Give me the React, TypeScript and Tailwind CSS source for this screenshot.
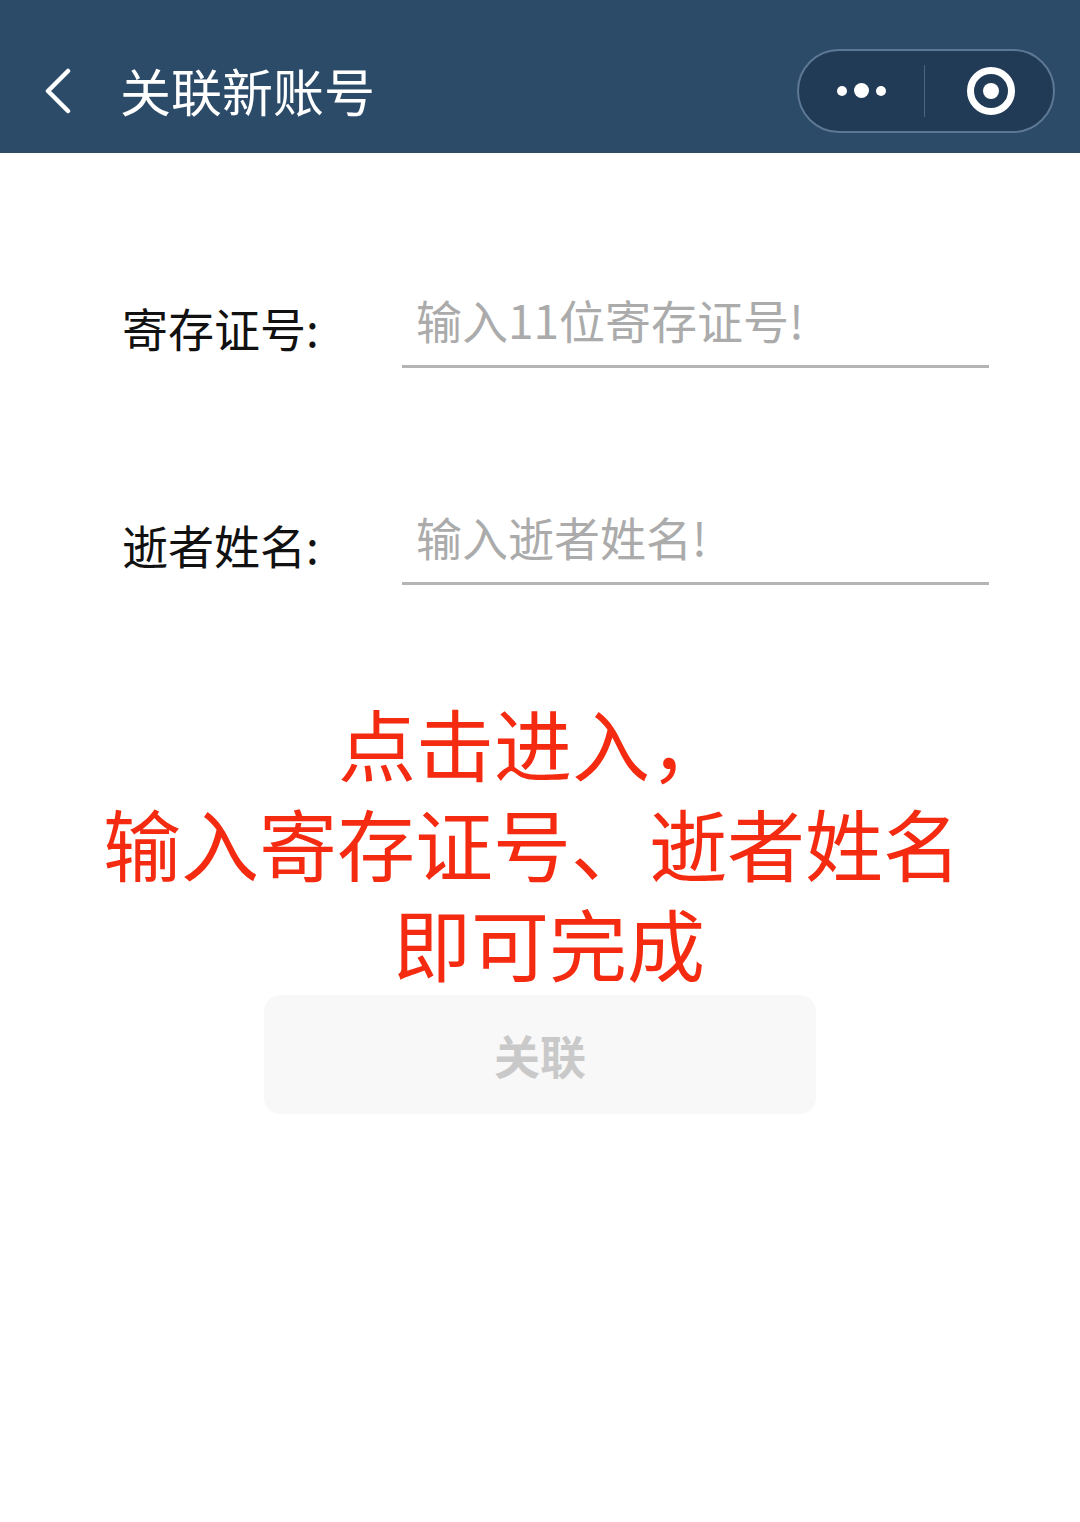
import React from "react";

const cjk = "font-['Noto_Sans_CJK_SC','Noto_Sans',sans-serif]";

function Capsule() {
  return (
    <div className="flex h-[84px] w-[258px] items-center rounded-full border-2 border-[#5d7894] bg-[#213a56]">
      <div className="flex flex-1 items-center justify-center gap-[7px]">
        <span className="h-[10px] w-[10px] rounded-full bg-white" />
        <span className="h-[15px] w-[15px] rounded-full bg-white" />
        <span className="h-[10px] w-[10px] rounded-full bg-white" />
      </div>
      <div className="h-[52px] w-[1px] bg-[#4b6682]" />
      <div className="flex flex-1 items-center justify-center pl-1">
        <span className="flex h-[48px] w-[48px] items-center justify-center rounded-full border-[7px] border-white">
          <span className="h-[16px] w-[16px] rounded-full bg-white" />
        </span>
      </div>
    </div>
  );
}

function FieldRow({ label, placeholder }: { label: string; placeholder: string }) {
  return (
    <div className="flex items-end">
      <div className="w-[402px] shrink-0 whitespace-nowrap pb-[18px] pl-[122px] text-[46px] leading-none text-[#111]">
        {label}
      </div>
      <div className="w-[587px] shrink-0 whitespace-nowrap border-b-[3px] border-[#b4b4b4] pb-[23px] pl-[14px] text-[46px] leading-none text-[#ababab]">
        {placeholder}
      </div>
    </div>
  );
}

export default function App() {
  return (
    <div className={`min-h-[1522px] w-[1080px] bg-white ${cjk}`}>
      <header className="flex h-[153px] items-center justify-between bg-[#2c4b69] pl-[42px] pr-[25px] pt-[28px]">
        <div className="flex items-center">
          <svg width="32" height="46" viewBox="0 0 32 46" className="mr-[46px]">
            <path d="M26 3 L6 23 L26 43" fill="none" stroke="white" strokeWidth="4.5" strokeLinecap="round" strokeLinejoin="round" />
          </svg>
          <h1 className="text-[51px] leading-none text-white">关联新账号</h1>
        </div>
        <Capsule />
      </header>

      <div className="flex flex-col gap-[145px] pt-[143px]">
        <FieldRow label="寄存证号:" placeholder="输入11位寄存证号!" />
        <FieldRow label="逝者姓名:" placeholder="输入逝者姓名!" />
      </div>

      <div className="mt-[118px] flex flex-col items-center gap-[22px] text-center text-[78px] leading-none text-[#f42b10]">
        <p className="pr-[14px]">点击进入，</p>
        <p className="-ml-[16px]">输入寄存证号、逝者姓名</p>
        <p className="pl-[18px]">即可完成</p>
      </div>

      <div className="mt-[14px] flex justify-center">
        <button className="flex h-[119px] w-[552px] items-center justify-center rounded-[16px] bg-[#f8f8f8] text-[46px] font-bold text-[#c9c9c9]">
          关联
        </button>
      </div>
    </div>
  );
}
